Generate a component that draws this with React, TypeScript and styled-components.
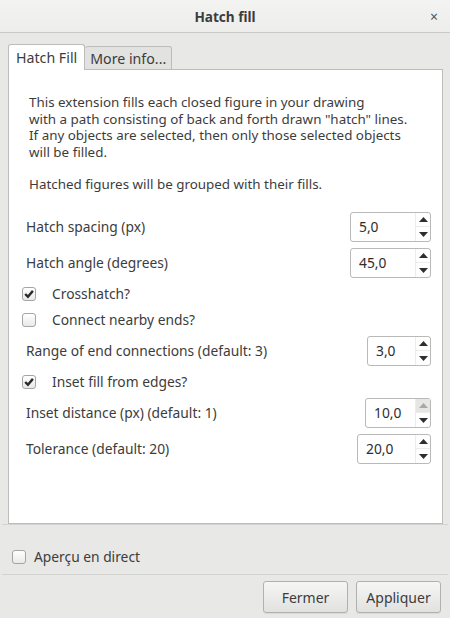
import React from 'react';
import styled, { createGlobalStyle } from 'styled-components';

const GlobalStyle = createGlobalStyle`
  html, body {
    margin: 0;
    padding: 0;
    background: #e8e8e7;
  }
  body {
    font-family: 'Noto Sans', 'DejaVu Sans', sans-serif;
    font-size: 13.6px;
    color: #3c3c3c;
  }
`;

type SpinProps = { value: string; width: number; upDisabled?: boolean };

const Spin: React.FC<SpinProps> = ({ value, width, upDisabled }) => (
  <SpinBox style={{ width }}>
    <SpinValue>{value}</SpinValue>
    <SpinButtons>
      <SpinArrow $disabled={upDisabled}>
        <svg width="9" height="5" viewBox="0 0 9 5">
          <path d="M0 5 L4.5 0 L9 5 Z" fill="currentColor" />
        </svg>
      </SpinArrow>
      <SpinArrow>
        <svg width="9" height="5" viewBox="0 0 9 5">
          <path d="M0 0 L9 0 L4.5 5 Z" fill="currentColor" />
        </svg>
      </SpinArrow>
    </SpinButtons>
  </SpinBox>
);

const Check: React.FC<{ checked?: boolean }> = ({ checked }) => (
  <CheckBox>
    {checked && (
      <svg width="12" height="12" viewBox="0 0 12 12">
        <path d="M2.2 6 L4.9 8.7 L9.9 2.9" fill="none" stroke="#2a2a2a" strokeWidth="2.4" />
      </svg>
    )}
  </CheckBox>
);

const App: React.FC = () => {
  return (
    <>
      <GlobalStyle />
      <Window>
        <TitleBar>
          <span />
          <Title>Hatch fill</Title>
          <Close>×</Close>
        </TitleBar>

        <Body>
          <Tabs>
            <Tab $active>Hatch Fill</Tab>
            <Tab>More info...</Tab>
          </Tabs>
          <Panel>
            <Description>
              This extension fills each closed figure in your drawing
              <br />
              with a path consisting of back and forth drawn "hatch" lines.
              <br />
              If any objects are selected, then only those selected objects
              <br />
              will be filled.
            </Description>
            <Description $gap>Hatched figures will be grouped with their fills.</Description>

            <Rows>
              <SpinRow>
                <Label>Hatch spacing (px)</Label>
                <Spin value="5,0" width={81} />
              </SpinRow>
              <SpinRow>
                <Label>Hatch angle (degrees)</Label>
                <Spin value="45,0" width={81} />
              </SpinRow>
              <CheckRow>
                <Check checked />
                <CheckLabel>Crosshatch?</CheckLabel>
              </CheckRow>
              <CheckRow>
                <Check />
                <CheckLabel>Connect nearby ends?</CheckLabel>
              </CheckRow>
              <SpinRow>
                <Label>Range of end connections (default: 3)</Label>
                <Spin value="3,0" width={64} />
              </SpinRow>
              <CheckRow>
                <Check checked />
                <CheckLabel>Inset fill from edges?</CheckLabel>
              </CheckRow>
              <SpinRow>
                <Label>Inset distance (px) (default: 1)</Label>
                <Spin value="10,0" width={66} upDisabled />
              </SpinRow>
              <SpinRow>
                <Label>Tolerance (default: 20)</Label>
                <Spin value="20,0" width={74} />
              </SpinRow>
            </Rows>
          </Panel>
        </Body>

        <Separator />
        <PreviewRow>
          <Check />
          <PreviewLabel>Aperçu en direct</PreviewLabel>
        </PreviewRow>
        <Separator />

        <ButtonBar>
          <Button>Fermer</Button>
          <Button>Appliquer</Button>
        </ButtonBar>
      </Window>
    </>
  );
};

export default App;

const Window = styled.div`
  width: 450px;
  height: 618px;
  display: flex;
  flex-direction: column;
  background: #e8e8e7;
  overflow: hidden;
`;

const TitleBar = styled.div`
  height: 32px;
  flex: none;
  display: grid;
  grid-template-columns: 1fr auto 1fr;
  align-items: center;
  background: linear-gradient(#f3f3f2, #ededec);
  border-bottom: 1px solid #c9c9c8;
`;

const Title = styled.div`
  font-weight: bold;
  font-size: 13.6px;
  color: #3c3c3c;
`;

const Close = styled.div`
  justify-self: end;
  margin-right: 12px;
  font-size: 14px;
  color: #555;
`;

const Body = styled.div`
  padding: 11px 7px 0 8px;
  flex: none;
`;

const Tabs = styled.div`
  display: flex;
  align-items: flex-end;
  height: 26px;
  position: relative;
  z-index: 1;
  margin-bottom: -1px;
`;

const Tab = styled.div<{ $active?: boolean }>`
  height: ${(p) => (p.$active ? 26 : 24)}px;
  box-sizing: border-box;
  padding: 0 ${(p) => (p.$active ? 7 : 5)}px;
  display: flex;
  align-items: center;
  border: 1px solid #bcbcbb;
  border-bottom: ${(p) => (p.$active ? 'none' : '1px solid #bcbcbb')};
  border-left: ${(p) => (p.$active ? '1px solid #bcbcbb' : 'none')};
  border-radius: 3px 3px 0 0;
  background: ${(p) => (p.$active ? '#ffffff' : '#e2e2e1')};
  color: #3c3c3c;
  font-size: 14.2px;
`;

const Panel = styled.div`
  height: 455px;
  box-sizing: border-box;
  background: #ffffff;
  border: 1px solid #bcbcbb;
  padding: 24px 11px 0 0;
`;

const Description = styled.p<{ $gap?: boolean }>`
  margin: ${(p) => (p.$gap ? '16px' : '0')} 0 0 20px;
  line-height: 16.6px;
  font-size: 13.4px;
`;

const Rows = styled.div`
  margin-top: 19px;
  display: flex;
  flex-direction: column;
  gap: 6px;
`;

const SpinRow = styled.div`
  height: 30px;
  display: flex;
  align-items: center;
  justify-content: space-between;
  padding-left: 17px;
`;

const Label = styled.span`
  font-size: 13.8px;
`;

const CheckRow = styled.div`
  height: 20px;
  display: flex;
  align-items: center;
  padding-left: 13px;
  gap: 16px;
`;

const CheckLabel = styled.span`
  font-size: 13.8px;
`;

const CheckBox = styled.div`
  width: 14px;
  height: 14px;
  flex: none;
  box-sizing: border-box;
  border: 1px solid #a5a5a4;
  border-radius: 3px;
  background: linear-gradient(#ffffff, #e9e9e8);
  display: flex;
  align-items: center;
  justify-content: center;
`;

const SpinBox = styled.div`
  height: 30px;
  box-sizing: border-box;
  display: flex;
  border: 1px solid #b9b9b8;
  border-radius: 3px;
  background: #ffffff;
`;

const SpinValue = styled.div`
  flex: 1;
  display: flex;
  align-items: center;
  padding-left: 8px;
  font-size: 13.8px;
  color: #2e2e2e;
`;

const SpinButtons = styled.div`
  width: 14px;
  display: flex;
  flex-direction: column;
  border-left: 1px solid #ececeb;
`;

const SpinArrow = styled.div<{ $disabled?: boolean }>`
  flex: 1;
  display: flex;
  align-items: center;
  justify-content: center;
  color: ${(p) => (p.$disabled ? '#a8a8a8' : '#2e2e2e')};
  background: ${(p) => (p.$disabled ? '#e6e6e5' : 'transparent')};
  & + & {
    border-top: 1px solid #ececeb;
  }
`;

const Separator = styled.div`
  height: 1px;
  margin: 0 2px;
  background: #d3d3d2;
  flex: none;
`;

const PreviewRow = styled.div`
  height: 35px;
  margin-top: 14px;
  display: flex;
  align-items: center;
  padding-left: 12px;
  gap: 8px;
`;

const PreviewLabel = styled.span`
  font-size: 13.8px;
`;

const ButtonBar = styled.div`
  display: flex;
  justify-content: flex-end;
  gap: 8px;
  padding: 6px 9px 0 0;
`;

const Button = styled.button`
  width: 85px;
  height: 32px;
  border: 1px solid #b0b0af;
  border-radius: 3px;
  background: linear-gradient(#f6f6f5, #e1e1e0);
  font-family: 'Noto Sans', 'DejaVu Sans', sans-serif;
  font-size: 14px;
  color: #3c3c3c;
  box-shadow: 0 1px 0 rgba(0, 0, 0, 0.06);
`;
